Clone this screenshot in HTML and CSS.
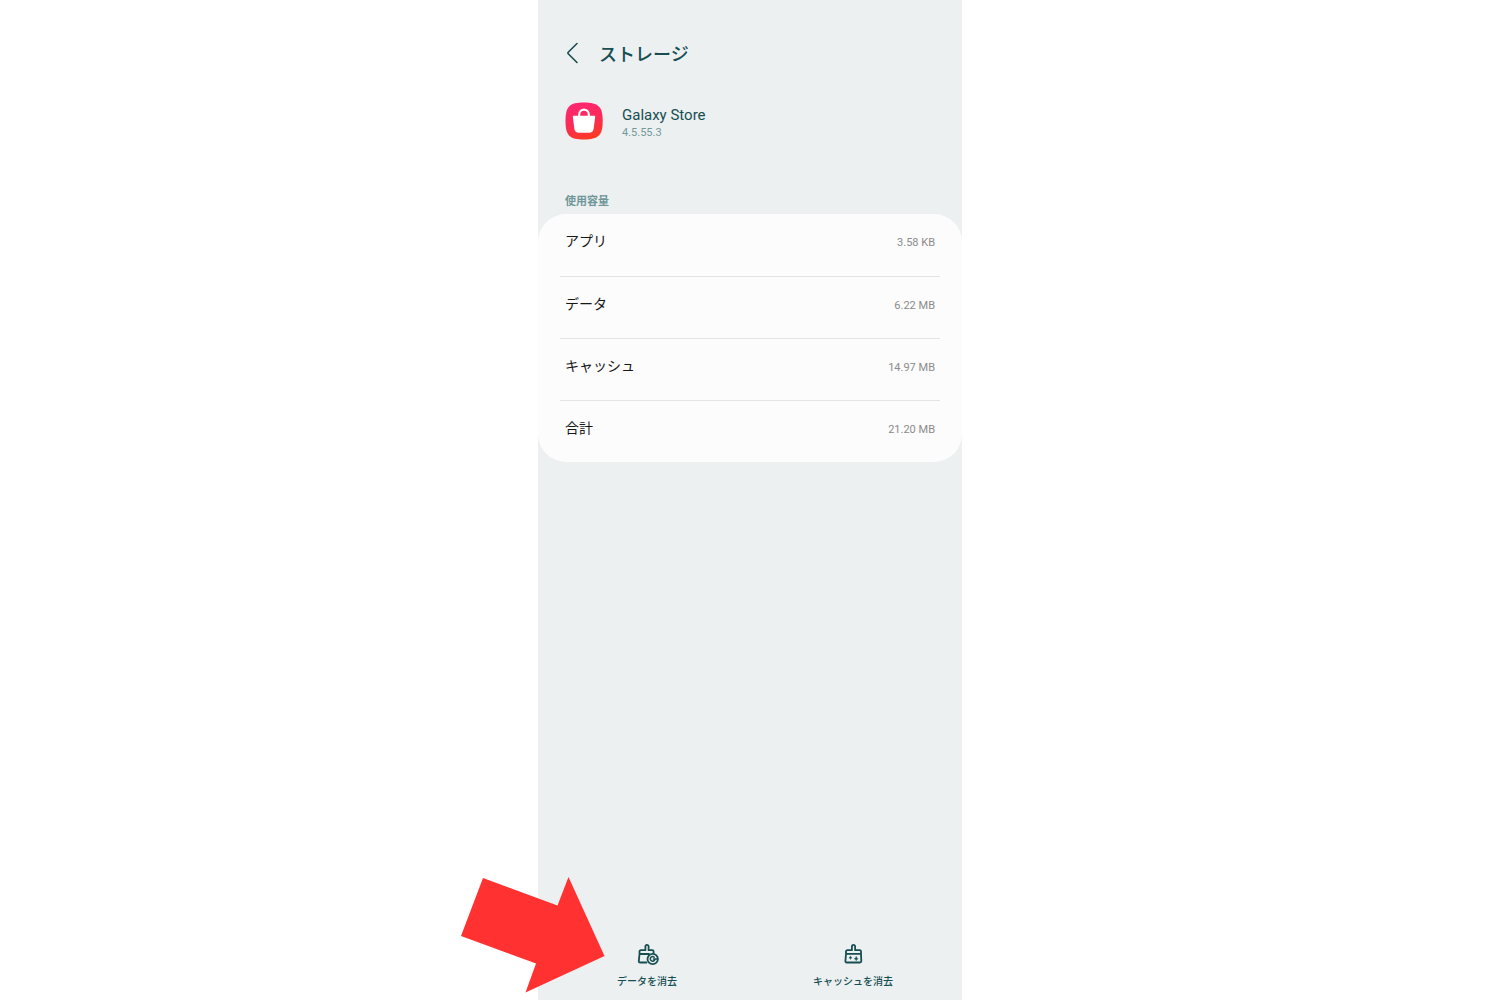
FILE: index.html
```html
<!DOCTYPE html>
<html lang="ja">
<head>
  <meta charset="utf-8">
  <meta name="viewport" content="width=device-width, initial-scale=1">
  <title>ストレージ</title>
  <link rel="stylesheet" href="styles.css">
</head>
<body>
  <div class="phone">
    <header class="topbar">
      <button class="back" type="button" aria-label="戻る">
        <svg width="14" height="22" viewBox="0 0 14 22" aria-hidden="true"><path d="M12 1.500 3.200 10.200Q2.400 11 3.200 11.800L12 20.500"/></svg>
      </button>
      <h1 class="title">ストレージ</h1>
    </header>

    <main class="content">
      <section class="app">
        <svg class="app-icon" width="38" height="38" viewBox="0 0 38 38" aria-hidden="true">
          <defs>
            <linearGradient id="store" x1="0.35" y1="0" x2="0.65" y2="1">
              <stop offset="0" stop-color="#ff2670"/>
              <stop offset="0.5" stop-color="#fb2b58"/>
              <stop offset="1" stop-color="#fb3b20"/>
            </linearGradient>
          </defs>
          <path fill="url(#store)" d="M19 0.500C33.500 0.500 37.700 4.700 37.700 19S33.500 37.500 19 37.500 0.500 33.500 0.500 19 4.500 0.500 19 0.500Z"/>
          <path fill="none" stroke="#fff" stroke-width="2.200" d="M14.200 15V12.500a4.800 4.800 0 0 1 9.600 0V15"/>
          <path fill="#fff" d="M8.400 13.700H29.600Q30.300 13.700 30.200 14.500L28.700 26.600Q28.200 30.800 24 30.800H14Q9.800 30.800 9.300 26.600L7.800 14.500Q7.700 13.700 8.400 13.700Z"/>
        </svg>
        <div class="app-text">
          <h2 class="app-name">Galaxy Store</h2>
          <p class="app-version">4.5.55.3</p>
        </div>
      </section>

      <h3 class="caption">使用容量</h3>
      <dl class="card">
        <div class="row"><dt>アプリ</dt><dd>3.58 KB</dd></div>
        <div class="row"><dt>データ</dt><dd>6.22 MB</dd></div>
        <div class="row"><dt>キャッシュ</dt><dd>14.97 MB</dd></div>
        <div class="row"><dt>合計</dt><dd>21.20 MB</dd></div>
      </dl>
    </main>

    <footer class="actions">
      <button class="action" type="button">
        <svg width="24" height="24" viewBox="0 0 24 24" aria-hidden="true">
          <path d="M11.500 20.500H5.100Q3.700 20.500 3.800 19.100L4.500 12V9.600Q4.500 8.200 5.900 8.200H10.400V4.500a1.600 1.600 0 0 1 3.200 0V8.200H17.200Q18.600 8.200 18.600 9.600V11M4.500 12H14"/>
          <circle cx="17.700" cy="17" r="5.200"/>
          <path class="reset" d="M19.200 15.200a2.300 2.300 0 1 0 0.600 2.300M18.500 17H22"/>
        </svg>
        <span>データを消去</span>
      </button>
      <button class="action" type="button">
        <svg width="24" height="24" viewBox="0 0 24 24" aria-hidden="true">
          <path d="M5 12V9.600Q5 8.200 6.400 8.200H10.900V4.500a1.600 1.600 0 0 1 3.200 0V8.200H18.600Q20 8.200 20 9.600V12L20.300 19.100Q20.300 20.500 18.900 20.500H5.800Q4.300 20.500 4.400 19.100ZM5 11.800H20"/>
          <path class="spark" d="M9.500 14.200Q9.700 15.600 11.100 15.800 9.700 16 9.500 17.400 9.300 16 7.900 15.800 9.300 15.600 9.500 14.200ZM15.200 14.600Q15.500 16.400 17.200 16.700 15.500 17 15.200 18.800 14.900 17 13.200 16.700 14.900 16.400 15.200 14.600Z"/>
        </svg>
        <span>キャッシュを消去</span>
      </button>
    </footer>

    <svg class="pointer" width="144" height="116" viewBox="0 0 144 116" aria-hidden="true">
      <path fill="#ff3131" d="M22 1 96.500 28.500 107.500 0 143.500 79 64.500 115.500 75 86.500 0 59Z"/>
    </svg>
  </div>
</body>
</html>
```
FILE: styles.css
```css
* {
  box-sizing: border-box;
}

body {
  margin: 0;
  background: #fff;
  font-family: Roboto, "Noto Sans CJK JP", sans-serif;
}

h1, h2, h3, p, dl, dd {
  margin: 0;
}

button {
  padding: 0;
  border: 0;
  background: none;
  color: inherit;
  font: inherit;
  cursor: pointer;
}

svg {
  display: block;
}

.phone {
  position: relative;
  display: flex;
  flex-direction: column;
  max-width: 424px;
  min-height: 100vh;
  margin: 0 auto;
  background: #ecf0f1;
  color: #164e52;
}

.topbar {
  display: flex;
  align-items: center;
  gap: 20px;
  padding: 38px 27px 0;
}

.back svg {
  fill: none;
  stroke: currentColor;
  stroke-width: 1.6;
  stroke-linecap: round;
}

.title {
  padding-top: 4px;
  font-size: 18px;
  font-weight: 500;
  line-height: 26px;
}

.content {
  flex: 1;
}

.app {
  display: flex;
  align-items: center;
  gap: 19px;
  padding: 33px 27px 0;
}

.app-text {
  padding-top: 4px;
}

.app-name {
  font-size: 15px;
  font-weight: 400;
  line-height: 20px;
}

.app-version {
  color: #73989a;
  font-size: 11px;
  line-height: 16px;
}

.caption {
  padding: 53px 27px 0;
  color: #6f9698;
  font-size: 11px;
  font-weight: 700;
  line-height: 16px;
}

.card {
  margin-top: 4px;
  padding: 0 22px;
  border-radius: 28px;
  background: #fcfcfc;
}

.row {
  display: flex;
  align-items: center;
  justify-content: space-between;
  height: 62px;
  padding: 0 5px 10px;
  color: #171717;
  font-size: 14px;
}

.row + .row {
  border-top: 1px solid #e3e4e4;
}

.row dd {
  padding-top: 5px;
  color: #8b8b8b;
  font-size: 11px;
}

.actions {
  display: grid;
  grid-template-columns: 1fr 1fr;
  padding: 0 6px 10px;
}

.action {
  display: flex;
  flex-direction: column;
  align-items: center;
  gap: 8px;
  font-size: 10px;
  font-weight: 500;
  line-height: 16px;
}

.action svg {
  fill: none;
  stroke: currentColor;
  stroke-width: 1.8;
  stroke-linecap: round;
  stroke-linejoin: round;
}

.action .spark {
  fill: currentColor;
  stroke-width: 0.4;
}

.action .reset {
  stroke-width: 1.5;
}

.pointer {
  position: absolute;
  bottom: 7px;
  left: -77px;
  pointer-events: none;
}
```
